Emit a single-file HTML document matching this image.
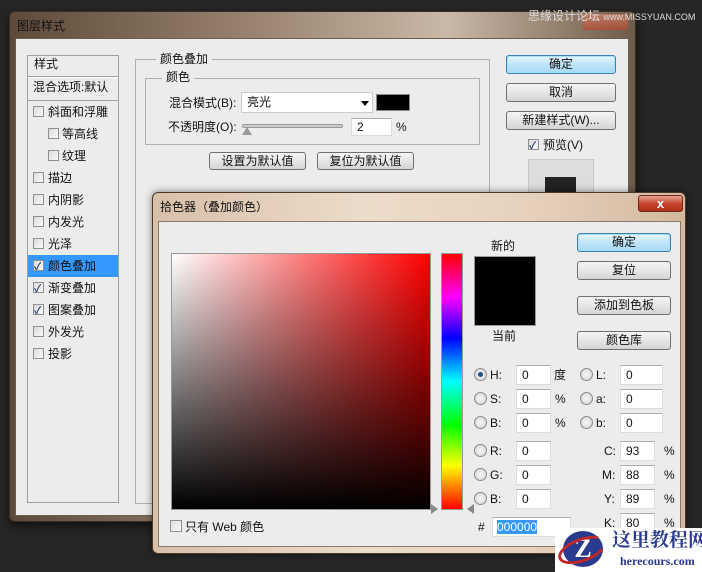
<!DOCTYPE html>
<html><head><meta charset="utf-8"><style>
*{margin:0;padding:0;box-sizing:border-box}
body{width:702px;height:572px;background:#262626;position:relative;overflow:hidden;font-family:"Liberation Sans","Noto Sans CJK SC",sans-serif;font-size:12px;color:#111}
.a{position:absolute}
.t{position:absolute;white-space:nowrap;line-height:14px}
.btn{position:absolute;border:1px solid #707070;border-radius:3px;background:linear-gradient(#f4f4f4,#e6e6e6 50%,#d4d4d4);text-align:center;font-size:12px;line-height:16px;color:#111}
.btn.d{border-color:#3c7fb1;background:linear-gradient(#eaf6fd,#bfe4f9 50%,#a7d9f5);box-shadow:0 0 0 1px #a6e0fb inset}
.cb{position:absolute;width:11px;height:11px;border:1px solid #8e8f8f;background:linear-gradient(135deg,#dcdcdc,#fafafa)}
.cb.k::after{content:"✓";position:absolute;left:0;top:-3px;font-size:10px;color:#2a3e7a;font-weight:bold}
.in{position:absolute;background:#fff;border:1px solid #dcdcdc;border-top-color:#abadb3;font-size:12px;line-height:18px;padding-left:5px}
.rd{position:absolute;width:13px;height:13px;border-radius:50%;border:1px solid #8a8a8a;background:radial-gradient(#f8f8f8,#d0d0d0)}
.rd.on::after{content:"";position:absolute;left:3px;top:3px;width:5px;height:5px;border-radius:50%;background:#1d4f86}
</style></head><body>
<!-- outer window -->
<div class="a" style="left:9px;top:11px;width:627px;height:511px;border:1px solid #3a2e24;border-radius:6px;background:linear-gradient(90deg,#5e4a3a,#9a8572 40%,#c9b9a8 70%,#6e5a48);box-shadow:0 4px 10px rgba(0,0,0,.6)"></div>
<div class="t" style="left:17px;top:19px;font-size:12px;color:#111">图层样式</div>
<div class="a" style="left:15px;top:38px;width:614px;height:478px;background:#ececec;border:1px solid #6d5e50"></div>
<!-- style list -->
<div class="a" style="left:27px;top:55px;width:92px;height:448px;border:1px solid #a0a0a0;background:#ececec"></div>
<div class="t" style="left:34px;top:57px">样式</div>
<div class="a" style="left:28px;top:76px;width:90px;height:2px;border-top:1px solid #a0a0a0;border-bottom:1px solid #fff"></div>
<div class="t" style="left:33px;top:80px">混合选项:默认</div>
<div class="a" style="left:28px;top:100px;width:90px;border-top:1px solid #a0a0a0"></div>
<div class="a" style="left:28px;top:255px;width:90px;height:22px;background:#3399ff"></div>
<div class="cb" style="left:33px;top:106px"></div><div class="t" style="left:48px;top:105px">斜面和浮雕</div>
<div class="cb" style="left:48px;top:128px"></div><div class="t" style="left:62px;top:127px">等高线</div>
<div class="cb" style="left:48px;top:150px"></div><div class="t" style="left:62px;top:149px">纹理</div>
<div class="cb" style="left:33px;top:172px"></div><div class="t" style="left:48px;top:171px">描边</div>
<div class="cb" style="left:33px;top:194px"></div><div class="t" style="left:48px;top:193px">内阴影</div>
<div class="cb" style="left:33px;top:216px"></div><div class="t" style="left:48px;top:215px">内发光</div>
<div class="cb" style="left:33px;top:238px"></div><div class="t" style="left:48px;top:237px">光泽</div>
<div class="cb k" style="left:33px;top:260px"></div><div class="t" style="left:48px;top:259px">颜色叠加</div>
<div class="cb k" style="left:33px;top:282px"></div><div class="t" style="left:48px;top:281px">渐变叠加</div>
<div class="cb k" style="left:33px;top:304px"></div><div class="t" style="left:48px;top:303px">图案叠加</div>
<div class="cb" style="left:33px;top:326px"></div><div class="t" style="left:48px;top:325px">外发光</div>
<div class="cb" style="left:33px;top:348px"></div><div class="t" style="left:48px;top:347px">投影</div>
<!-- main group -->
<div class="a" style="left:135px;top:59px;width:355px;height:445px;border:1px solid #b0b0b0"></div>
<div class="t" style="left:156px;top:52px;background:#ececec;padding:0 4px">颜色叠加</div>
<div class="a" style="left:145px;top:78px;width:335px;height:67px;border:1px solid #b0b0b0"></div>
<div class="t" style="left:162px;top:70px;background:#ececec;padding:0 4px">颜色</div>
<div class="t" style="left:169px;top:96px">混合模式(B):</div>
<div class="in" style="left:241px;top:92px;width:132px;height:21px;border-color:#ccc;line-height:19px">亮光</div>
<div class="a" style="left:361px;top:101px;border:4px solid transparent;border-top:5px solid #000"></div>
<div class="a" style="left:376px;top:94px;width:34px;height:17px;background:#000;border:1px solid #888"></div>
<div class="t" style="left:168px;top:120px">不透明度(O):</div>
<div class="a" style="left:242px;top:124px;width:101px;height:4px;border:1px solid #999;border-radius:2px;background:#ccc"></div>
<div class="a" style="left:242px;top:122px;border:5px solid transparent;border-bottom:8px solid #999"></div>
<div class="in" style="left:351px;top:118px;width:41px;height:18px;line-height:16px">2</div>
<div class="t" style="left:396px;top:120px">%</div>
<div class="btn" style="left:209px;top:152px;width:97px;height:18px">设置为默认值</div>
<div class="btn" style="left:317px;top:152px;width:97px;height:18px">复位为默认值</div>
<div class="btn d" style="left:506px;top:55px;width:110px;height:19px">确定</div>
<div class="btn" style="left:506px;top:83px;width:110px;height:19px">取消</div>
<div class="btn" style="left:506px;top:111px;width:110px;height:19px">新建样式(W)...</div>
<div class="cb k" style="left:528px;top:139px"></div><div class="t" style="left:543px;top:138px">预览(V)</div>
<div class="a" style="left:528px;top:159px;width:66px;height:40px;border:1px solid #c8c8c8;background:#ddd"></div>
<div class="a" style="left:545px;top:177px;width:31px;height:20px;background:#222"></div>
<!-- top watermark -->
<div class="a" style="left:582px;top:14px;width:46px;height:16px;border-radius:3px;background:linear-gradient(#e08a70,#c0402a);opacity:.6"></div>
<div class="t" style="left:528px;top:9px;font-size:12px;color:#ddd">思缘设计论坛 <span style="font-size:9px">www.MISSYUAN.COM</span></div>
<!-- color picker window -->
<div class="a" style="left:152px;top:192px;width:534px;height:362px;border:1px solid #4a3a2c;border-radius:6px;background:linear-gradient(90deg,#d9c0a8,#ecdccb 40%,#e6d2bd 70%,#d4b89e);box-shadow:0 0 8px rgba(0,0,0,.5)"></div>
<div class="t" style="left:160px;top:200px">拾色器（叠加颜色）</div>
<div class="a" style="left:638px;top:195px;width:45px;height:17px;border:1px solid #6a2a20;border-radius:3px;background:linear-gradient(#e9a594,#c6452f 50%,#b03018);color:#fff;text-align:center;font-weight:bold;font-size:13px;line-height:15px">x</div>
<div class="a" style="left:158px;top:221px;width:523px;height:326px;background:#ececec;border:1px solid #8a7a6a"></div>
<div class="a" style="left:171px;top:253px;width:260px;height:257px;border:1px solid #999;background:linear-gradient(to bottom,rgba(0,0,0,0),#000),linear-gradient(to right,#fff,#f00)"></div>
<div class="a" style="left:441px;top:253px;width:22px;height:257px;border:1px solid #999;background:linear-gradient(#f00,#f0f 17%,#00f 33%,#0ff 50%,#0f0 67%,#ff0 83%,#f00)"></div>
<div class="a" style="left:431px;top:504px;border:5px solid transparent;border-left:7px solid #888"></div>
<div class="a" style="left:462px;top:504px;border:5px solid transparent;border-right:7px solid #888"></div>
<div class="t" style="left:491px;top:239px">新的</div>
<div class="a" style="left:474px;top:256px;width:62px;height:70px;background:#000;border:1px solid #999"></div>
<div class="t" style="left:492px;top:329px">当前</div>
<div class="btn d" style="left:577px;top:233px;width:94px;height:19px">确定</div>
<div class="btn" style="left:577px;top:261px;width:94px;height:19px">复位</div>
<div class="btn" style="left:577px;top:296px;width:94px;height:19px">添加到色板</div>
<div class="btn" style="left:577px;top:331px;width:94px;height:19px">颜色库</div>
<div class="rd on" style="left:474px;top:368px"></div><div class="t" style="left:490px;top:368px">H:</div><div class="in" style="left:516px;top:365px;width:35px;height:20px">0</div><div class="t" style="left:554px;top:368px">度</div>
<div class="rd" style="left:474px;top:392px"></div><div class="t" style="left:490px;top:392px">S:</div><div class="in" style="left:516px;top:389px;width:35px;height:20px">0</div><div class="t" style="left:555px;top:392px">%</div>
<div class="rd" style="left:474px;top:416px"></div><div class="t" style="left:490px;top:416px">B:</div><div class="in" style="left:516px;top:413px;width:35px;height:20px">0</div><div class="t" style="left:555px;top:416px">%</div>
<div class="rd" style="left:474px;top:444px"></div><div class="t" style="left:490px;top:444px">R:</div><div class="in" style="left:516px;top:441px;width:35px;height:20px">0</div>
<div class="rd" style="left:474px;top:468px"></div><div class="t" style="left:490px;top:468px">G:</div><div class="in" style="left:516px;top:465px;width:35px;height:20px">0</div>
<div class="rd" style="left:474px;top:492px"></div><div class="t" style="left:490px;top:492px">B:</div><div class="in" style="left:516px;top:489px;width:35px;height:20px">0</div>
<div class="rd" style="left:580px;top:368px"></div><div class="t" style="left:596px;top:368px">L:</div><div class="in" style="left:620px;top:365px;width:43px;height:20px">0</div>
<div class="rd" style="left:580px;top:392px"></div><div class="t" style="left:596px;top:392px">a:</div><div class="in" style="left:620px;top:389px;width:43px;height:20px">0</div>
<div class="rd" style="left:580px;top:416px"></div><div class="t" style="left:596px;top:416px">b:</div><div class="in" style="left:620px;top:413px;width:43px;height:20px">0</div>
<div class="t" style="left:604px;top:444px">C:</div><div class="in" style="left:620px;top:441px;width:35px;height:20px">93</div><div class="t" style="left:664px;top:444px">%</div>
<div class="t" style="left:602px;top:468px">M:</div><div class="in" style="left:620px;top:465px;width:35px;height:20px">88</div><div class="t" style="left:664px;top:468px">%</div>
<div class="t" style="left:604px;top:492px">Y:</div><div class="in" style="left:620px;top:489px;width:35px;height:20px">89</div><div class="t" style="left:664px;top:492px">%</div>
<div class="t" style="left:604px;top:516px">K:</div><div class="in" style="left:620px;top:513px;width:35px;height:20px">80</div><div class="t" style="left:664px;top:516px">%</div>
<div class="t" style="left:478px;top:520px">#</div>
<div class="in" style="left:492px;top:517px;width:79px;height:20px;padding-left:4px"><span style="background:#3399ff;color:#fff">000000</span></div>
<div class="cb" style="left:170px;top:520px;width:12px;height:12px"></div><div class="t" style="left:185px;top:520px">只有 Web 颜色</div>
<!-- bottom watermark -->
<div class="a" style="left:555px;top:528px;width:147px;height:44px;background:#fff"></div>
<div class="a" style="left:563px;top:531px;width:40px;height:36px;border-radius:50%;background:#2a3a8e;color:#fff;font-weight:bold;font-size:26px;text-align:center;line-height:36px;font-family:'Liberation Serif',serif">Z</div>
<div class="a" style="left:557px;top:538px;width:50px;height:24px;border:3px solid #c0282a;border-radius:50%;border-right-color:transparent;transform:rotate(-20deg)"></div>
<div class="t" style="left:612px;top:530px;font-size:19px;line-height:22px;color:#2a3a8e;font-weight:bold;font-family:'Liberation Serif','Noto Serif CJK SC',serif">这里教程网</div>
<div class="t" style="left:620px;top:554px;font-size:12px;color:#2a3a8e;font-weight:bold;font-family:'Liberation Serif',serif">herecours.com</div>
</body></html>
